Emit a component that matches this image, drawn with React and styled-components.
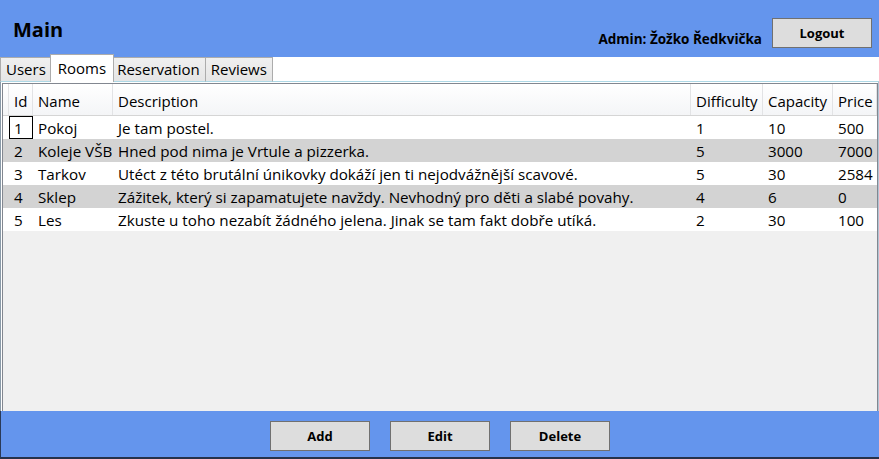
import styled, { createGlobalStyle } from 'styled-components';

const FONT = `"Segoe UI", "Open Sans", "Noto Sans", sans-serif`;

const GlobalStyle = createGlobalStyle`
  html, body {
    margin: 0;
    padding: 0;
    width: 879px;
    height: 459px;
    overflow: hidden;
  }
  body {
    font-family: ${FONT};
    color: #000;
  }
  * {
    box-sizing: border-box;
  }
`;

const Window = styled.div`
  display: flex;
  flex-direction: column;
  width: 879px;
  height: 459px;
  background: #6495ed;
`;

const Header = styled.header`
  display: flex;
  align-items: flex-start;
  height: 57px;
  padding: 0 7px 0 13px;
`;

const Title = styled.h1`
  margin: 17px 0 0;
  font-size: 20px;
  line-height: 26px;
  font-weight: 700;
  flex: 1;
`;

const AdminLabel = styled.span`
  margin-top: 30px;
  font-size: 13.5px;
  line-height: 18px;
  font-weight: 700;
`;

const Button = styled.button`
  width: 100px;
  height: 30px;
  margin-top: ${(p) => p.$top || 0}px;
  margin-left: ${(p) => p.$left || 0}px;
  background: #dddddd;
  border: 1px solid #707070;
  border-radius: 0;
  font-family: ${FONT};
  font-size: 13px;
  font-weight: 700;
  color: #000;
  padding: 0;
  cursor: pointer;
`;

const Content = styled.main`
  flex: 1;
  display: flex;
  flex-direction: column;
  background: #fff;
  min-height: 0;
`;

const TabStrip = styled.div`
  display: flex;
  align-items: flex-start;
  height: 24px;
  position: relative;
  z-index: 1;
`;

const Tab = styled.div`
  position: relative;
  z-index: ${(p) => (p.$active ? 2 : 1)};
  height: ${(p) => (p.$active ? 28 : 25)}px;
  margin: ${(p) => (p.$active ? '-3px -2px 0' : '0')};
  padding: ${(p) => (p.$active ? '2px 7px 0' : '0 5px')};
  border: 1px solid #acacac;
  border-left-width: ${(p) => (p.$first || p.$active ? 1 : 0)}px;
  border-bottom: ${(p) => (p.$active ? 'none' : '1px solid #add8e6')};
  background: ${(p) =>
    p.$active ? '#fff' : 'linear-gradient(#f0f0f0, #e5e5e5)'};
  font-size: 15px;
  line-height: 22px;
  white-space: nowrap;
`;

const Panel = styled.section`
  flex: 1;
  display: flex;
  flex-direction: column;
  border-top: 1px solid #add8e6;
  border-left: 1px solid #8a9aa8;
  border-right: 1px solid #b0c4d4;
  padding: 1px 0 0 1px;
  min-height: 0;
`;

const Grid = styled.div`
  flex: 1;
  display: flex;
  flex-direction: column;
  border: 1px solid #828790;
  border-bottom: none;
  background: #f0f0f0;
  min-height: 0;
`;

const COLUMNS = '6px 24px 80px 578px 72px 70px 1fr';

const HeaderRow = styled.div`
  display: grid;
  grid-template-columns: ${COLUMNS};
  height: 32px;
  background: linear-gradient(#ffffff, #f4f5f7);
  border-bottom: 1px solid #d5d5d5;
`;

const HeaderCell = styled.div`
  padding: 6px 0 0 5px;
  border-right: 1px solid #e2e3e5;
  font-size: 15px;
  line-height: 22px;
  white-space: nowrap;
  overflow: hidden;
`;

const Row = styled.div`
  display: grid;
  grid-template-columns: ${COLUMNS};
  height: 23px;
  background: ${(p) => (p.$odd ? '#d3d3d3' : '#ffffff')};
`;

const Cell = styled.div`
  padding: 1px 0 0 4px;
  font-size: 15.2px;
  line-height: 21px;
  white-space: nowrap;
  overflow: hidden;
  border: 1px solid ${(p) => (p.$focused ? '#000' : 'transparent')};
`;

const Footer = styled.footer`
  display: flex;
  justify-content: center;
  gap: 20px;
  height: 48px;
  padding-top: 10px;
  border-left: 1px solid #2a3a58;
  border-bottom: 2px solid #26324a;
`;

const rooms = [
  { id: 1, name: 'Pokoj', description: 'Je tam postel.', difficulty: 1, capacity: 10, price: 500 },
  { id: 2, name: 'Koleje VŠB', description: 'Hned pod nima je Vrtule a pizzerka.', difficulty: 5, capacity: 3000, price: 7000 },
  { id: 3, name: 'Tarkov', description: 'Utéct z této brutální únikovky dokáží jen ti nejodvážnější scavové.', difficulty: 5, capacity: 30, price: 2584 },
  { id: 4, name: 'Sklep', description: 'Zážitek, který si zapamatujete navždy. Nevhodný pro děti a slabé povahy.', difficulty: 4, capacity: 6, price: 0 },
  { id: 5, name: 'Les', description: 'Zkuste u toho nezabít žádného jelena. Jinak se tam fakt dobře utíká.', difficulty: 2, capacity: 30, price: 100 },
];

const tabs = ['Users', 'Rooms', 'Reservation', 'Reviews'];
const headers = ['Id', 'Name', 'Description', 'Difficulty', 'Capacity', 'Price'];

export default function App() {
  return (
    <>
      <GlobalStyle />
      <Window>
        <Header>
          <Title>Main</Title>
          <AdminLabel>Admin: Žožko Ředkvička</AdminLabel>
          <Button $top={18} $left={10}>Logout</Button>
        </Header>
        <Content>
          <TabStrip>
            {tabs.map((t, i) => (
              <Tab key={t} $first={i === 0} $active={t === 'Rooms'}>
                {t}
              </Tab>
            ))}
          </TabStrip>
          <Panel>
            <Grid>
              <HeaderRow>
                <HeaderCell />
                {headers.map((h) => (
                  <HeaderCell key={h}>{h}</HeaderCell>
                ))}
              </HeaderRow>
              {rooms.map((r, i) => (
                <Row key={r.id} $odd={i % 2 === 1}>
                  <Cell />
                  <Cell $focused={i === 0}>{r.id}</Cell>
                  <Cell>{r.name}</Cell>
                  <Cell>{r.description}</Cell>
                  <Cell>{r.difficulty}</Cell>
                  <Cell>{r.capacity}</Cell>
                  <Cell>{r.price}</Cell>
                </Row>
              ))}
            </Grid>
          </Panel>
        </Content>
        <Footer>
          <Button>Add</Button>
          <Button>Edit</Button>
          <Button>Delete</Button>
        </Footer>
      </Window>
    </>
  );
}
